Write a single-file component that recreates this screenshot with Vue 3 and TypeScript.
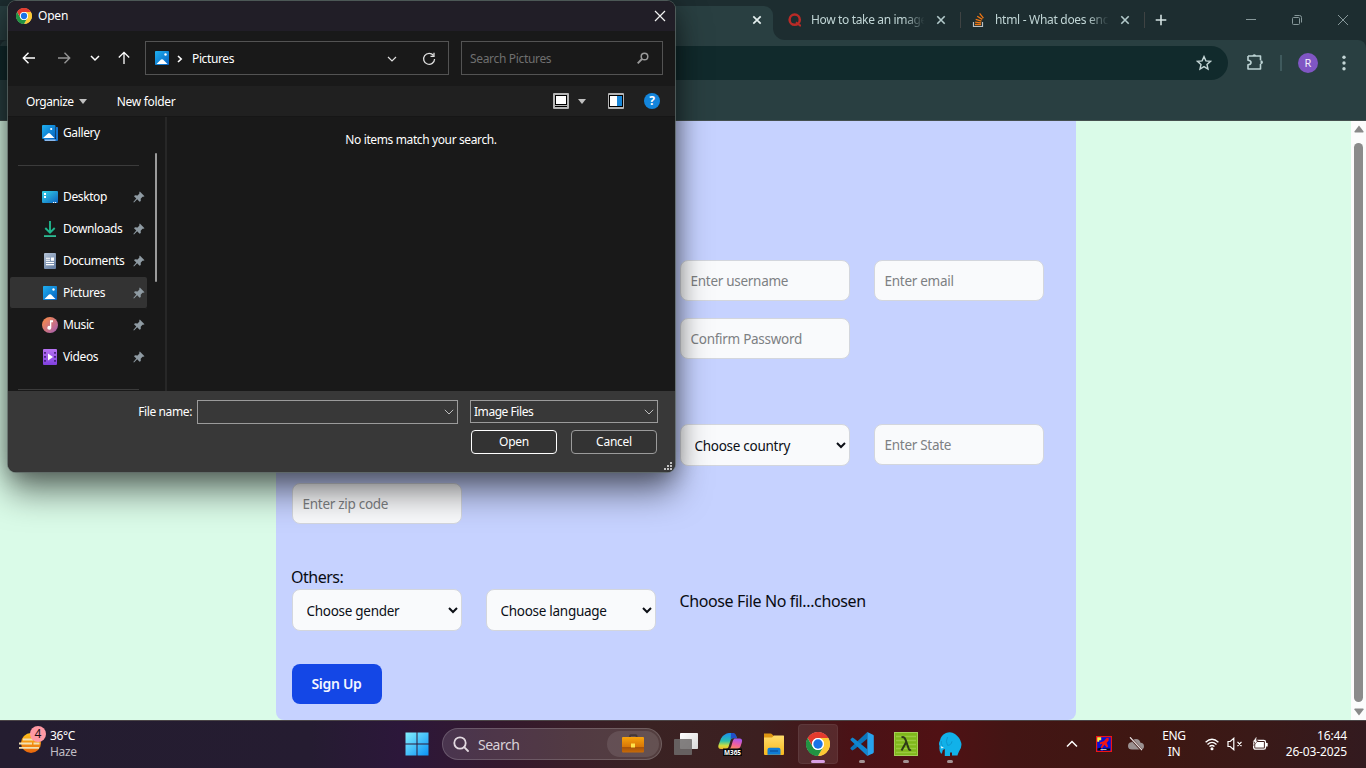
<script setup lang="ts">
interface NavItem {
  name: string
  kind: string
  pinned?: boolean
  active?: boolean
}

const navItems: NavItem[] = [
  { name: 'Gallery', kind: 'gallery' },
  { name: '', kind: 'divider' },
  { name: 'Desktop', kind: 'desktop', pinned: true },
  { name: 'Downloads', kind: 'downloads', pinned: true },
  { name: 'Documents', kind: 'documents', pinned: true },
  { name: 'Pictures', kind: 'pictures', pinned: true, active: true },
  { name: 'Music', kind: 'music', pinned: true },
  { name: 'Videos', kind: 'videos', pinned: true },
  { name: '', kind: 'divider' },
]
</script>

<template>
  <div class="screen">
    <svg width="0" height="0" class="defs">
      <defs>
        <linearGradient id="pic" x1="0" y1="0" x2="1" y2="1"><stop offset="0" stop-color="#1fb0f0" /><stop offset="1" stop-color="#0560c0" /></linearGradient>
        <linearGradient id="desk" x1="0" y1="0" x2="1" y2="1"><stop offset="0" stop-color="#35d5e8" /><stop offset="1" stop-color="#0d62c0" /></linearGradient>
        <linearGradient id="doc" x1="0" y1="0" x2="0.6" y2="1"><stop offset="0" stop-color="#b4c3d6" /><stop offset="1" stop-color="#6a82a5" /></linearGradient>
        <linearGradient id="mus" x1="0" y1="0" x2="1" y2="1"><stop offset="0.2" stop-color="#ee8557" /><stop offset="1" stop-color="#a05cb8" /></linearGradient>
        <linearGradient id="vid" x1="0" y1="0" x2="0" y2="1"><stop offset="0" stop-color="#b873f4" /><stop offset="1" stop-color="#8140e0" /></linearGradient>
        <linearGradient id="win" x1="0" y1="0" x2="1" y2="1"><stop offset="0" stop-color="#84f0ff" /><stop offset="1" stop-color="#0a92f5" /></linearGradient>
        <linearGradient id="sun" x1="0" y1="0" x2="0" y2="1"><stop offset="0" stop-color="#ffc21a" /><stop offset="1" stop-color="#e8640c" /></linearGradient>
        <linearGradient id="case" x1="0" y1="0" x2="0" y2="1"><stop offset="0" stop-color="#f7a30c" /><stop offset="0.62" stop-color="#d97706" /><stop offset="0.68" stop-color="#a85308" /><stop offset="1" stop-color="#c96c08" /></linearGradient>
        <linearGradient id="fold" x1="0" y1="0" x2="0" y2="1"><stop offset="0" stop-color="#ffdc6b" /><stop offset="1" stop-color="#f8b81d" /></linearGradient>
        <linearGradient id="copA" x1="0" y1="0" x2="0" y2="1"><stop offset="0" stop-color="#1a8ff0" /><stop offset="0.5" stop-color="#29bfae" /><stop offset="0.8" stop-color="#d3df3b" /><stop offset="1" stop-color="#f2b52b" /></linearGradient>
        <linearGradient id="copB" x1="0.6" y1="0" x2="0.3" y2="1"><stop offset="0" stop-color="#a559f2" /><stop offset="0.5" stop-color="#ec5da8" /><stop offset="1" stop-color="#ff8a5c" /></linearGradient>
        <linearGradient id="tvA" x1="0" y1="0" x2="1" y2="1"><stop offset="0" stop-color="#ffffff" /><stop offset="1" stop-color="#d8d8d8" /></linearGradient>
        <symbol id="chrome" viewBox="0 0 48 48">
          <circle cx="24" cy="24" r="23.500" fill="#fff" />
          <path d="M24 12h20.8A24 24 0 0 0 3.2 12l10.4 18A12 12 0 0 1 24 12z" fill="#e33b2e" />
          <path d="M34.4 30 24 48A24 24 0 0 0 44.8 12H24a12 12 0 0 1 10.4 18z" fill="#fcc934" />
          <path d="M13.6 30 3.2 12A24 24 0 0 0 24 48l10.4-18a12 12 0 0 1-20.8 0z" fill="#229342" />
          <circle cx="24" cy="24" r="12" fill="#fff" />
          <circle cx="24" cy="24" r="9.4" fill="#1a73e8" />
        </symbol>
        <symbol id="picture" viewBox="0 0 14 14">
          <rect width="14" height="14" rx="0.8" fill="url(#pic)" />
          <path d="M1.5 13 6 8.6q1-.8 2 0L12.500 13z" fill="#fff" />
          <circle cx="10.500" cy="3.500" r="1.200" fill="#fff" />
        </symbol>
      </defs>
    </svg>

    <!-- browser -->
    <header class="tabstrip">
      <div class="strip-left">
        <div class="tab-active">
          <svg width="10" height="10" viewBox="0 0 10 10"><path d="M1.300 1.300l7.400 7.400M8.700 1.300L1.300 8.700" stroke="#e4efef" stroke-width="1.700" /></svg>
        </div>
      </div>
      <div class="strip-right">
        <div class="tab">
          <svg class="fav" width="14" height="14" viewBox="0 0 14 14"><circle cx="6.700" cy="6.700" r="5.100" fill="none" stroke="#b92b27" stroke-width="2.500" /><path d="M8 9.300l4 3.200H13" fill="none" stroke="#b92b27" stroke-width="1.800" /></svg>
          <span class="tab-title t1">How to take an image</span>
          <svg width="10" height="10" viewBox="0 0 10 10"><path d="M1.300 1.300l7.400 7.400M8.700 1.300L1.300 8.700" stroke="#b3cacb" stroke-width="1.600" /></svg>
        </div>
        <i class="tab-sep"></i>
        <div class="tab second">
          <svg class="fav" width="14" height="16" viewBox="0 0 14 16"><path d="M1.500 10v4.500h9V10" fill="none" stroke="#bcc0c4" stroke-width="1.200" /><path d="M3 12.500h6M3.100 10.100l6 .8M3.700 7.300l5.800 1.800M5.200 4.200l5.100 3.200M7.600 1.400l3.800 4.700" stroke="#ef7714" stroke-width="1.300" /></svg>
          <span class="tab-title t2">html - What does enc</span>
          <svg width="10" height="10" viewBox="0 0 10 10"><path d="M1.300 1.300l7.400 7.400M8.700 1.300L1.300 8.700" stroke="#b3cacb" stroke-width="1.600" /></svg>
        </div>
        <i class="tab-sep"></i>
        <svg class="plus" width="12" height="12" viewBox="0 0 12 12"><path d="M6 .7v10.600M.7 6h10.600" stroke="#d4e2e2" stroke-width="1.600" /></svg>
        <div class="winctl">
          <svg width="12" height="12" viewBox="0 0 12 12"><path d="M1 5.500h10" stroke="#87989a" /></svg>
          <svg width="12" height="12" viewBox="0 0 12 12"><rect x="1.500" y="3.500" width="7" height="7" rx="1" fill="none" stroke="#87989a" /><path d="M3.500 1.500h5a2 2 0 0 1 2 2v5" fill="none" stroke="#87989a" /></svg>
          <svg width="12" height="12" viewBox="0 0 12 12"><path d="M1 1l10 10M11 1L1 11" stroke="#87989a" /></svg>
        </div>
      </div>
    </header>
    <div class="toolbar-wrap">
      <div class="toolbar">
        <div class="omnibox">
          <svg width="16" height="16" viewBox="0 0 16 16"><path d="M8 1.600l1.900 4.300 4.600.4-3.500 3.100 1 4.600L8 11.600 4 14l1-4.600L1.500 6.300l4.600-.4z" fill="none" stroke="#c4d6d6" stroke-width="1.400" /></svg>
        </div>
        <svg class="ext" width="18" height="18" viewBox="0 0 18 18"><path d="M2 3h12.500v4.300M14.500 11v5H2v-4.200q3-.3 3-2.300T2 7.300V3" fill="none" stroke="#bcd3d4" stroke-width="1.600" stroke-linejoin="round" /><path d="M6.500 3a1.800 1.800 0 0 1 3.600 0zM14.500 7.200q2.500.2 2.500 2t-2.500 2z" fill="#bcd3d4" /></svg>
        <i class="tool-sep"></i>
        <span class="avatar">R</span>
        <svg class="dots" width="4" height="16" viewBox="0 0 4 16" fill="#c3d5d5"><circle cx="2" cy="2.300" r="1.700" /><circle cx="2" cy="8" r="1.700" /><circle cx="2" cy="13.700" r="1.700" /></svg>
      </div>
    </div>

    <!-- sign-up page -->
    <main class="page">
      <div class="viewport">
        <form class="card" @submit.prevent>
          <div class="grid first">
            <input class="c3" placeholder="Enter username" />
            <input class="c4" placeholder="Enter email" />
            <input class="c3" type="password" placeholder="Confirm Password" />
          </div>
          <div class="grid address">
            <select class="c3"><option>Choose country</option></select>
            <input class="c4" placeholder="Enter State" />
            <input class="c1" placeholder="Enter zip code" />
          </div>
          <div class="others">Others:</div>
          <div class="grid last">
            <select><option>Choose gender</option></select>
            <select><option>Choose language</option></select>
            <span class="file">Choose File No fil...chosen</span>
          </div>
          <button class="signup" type="submit">Sign Up</button>
        </form>
      </div>
      <div class="scrollbar">
        <svg width="10" height="8" viewBox="0 0 10 8"><path d="M5 .5l4.600 6q.2 1-.8 1H1.200q-1 0-.8-1z" fill="#898989" /></svg>
        <i class="thumb"></i>
        <svg width="10" height="8" viewBox="0 0 10 8"><path d="M5 7.500l4.600-6q.2-1-.8-1H1.200q-1 0-.8 1z" fill="#898989" /></svg>
      </div>
    </main>

    <!-- file dialog -->
    <section class="dialog">
      <div class="d-title">
        <svg width="16" height="16"><use href="#chrome" /></svg>
        <span>Open</span>
        <svg class="d-close" width="12" height="12" viewBox="0 0 12 12"><path d="M1 1l10 10M11 1L1 11" stroke="#f2f2f2" stroke-width="1.200" /></svg>
      </div>
      <div class="d-nav">
        <svg width="14" height="14" viewBox="0 0 14 14" fill="none" stroke="#fff" stroke-width="1.400"><path d="M13 7H1.500M6.500 1.800L1.300 7l5.200 5.200" /></svg>
        <svg class="n2" width="14" height="14" viewBox="0 0 14 14" fill="none" stroke="#959595" stroke-width="1.400"><path d="M1 7h11.500M7.500 1.800L12.700 7l-5.200 5.200" /></svg>
        <svg class="n3" width="10" height="10" viewBox="0 0 10 10" fill="none" stroke="#fff" stroke-width="1.500"><path d="M1 3l4 4 4-4" /></svg>
        <svg class="n4" width="14" height="14" viewBox="0 0 14 14" fill="none" stroke="#fff" stroke-width="1.300"><path d="M7 13V1.500M1.800 6.500L7 1.300l5.200 5.200" /></svg>
        <div class="address-bar">
          <svg width="14" height="14"><use href="#picture" /></svg>
          <svg class="crumb" width="6" height="8" viewBox="0 0 6 8" fill="none" stroke="#fff" stroke-width="1.600"><path d="M1 1l3.200 3L1 7" /></svg>
          <span>Pictures</span>
          <svg class="drop" width="10" height="8" viewBox="0 0 10 8" fill="none" stroke="#e0e0e0" stroke-width="1.200"><path d="M1 2l4 4 4-4" /></svg>
          <svg class="reload" width="14" height="14" viewBox="0 0 14 14" fill="none" stroke="#dedede" stroke-width="1.300"><path d="M11.500 3.500A5.500 5.500 0 1 0 12.600 7" /><path d="M12 .8v3.500H8.500" /></svg>
        </div>
        <div class="search-box">
          <span>Search Pictures</span>
          <svg width="12" height="12" viewBox="0 0 12 12" fill="none" stroke="#9a9a9a"><circle cx="7.500" cy="4.500" r="3.300" stroke-width="1.500" /><path d="M5 7L.7 11.300" stroke-width="1.900" /></svg>
        </div>
      </div>
      <div class="d-tools">
        <span class="organize">Organize</span>
        <i class="tri"></i>
        <span class="newfolder">New folder</span>
        <svg class="view" width="16" height="16" viewBox="0 0 16 16"><rect width="16" height="16" rx="1" fill="#b5b5b5" /><rect x="2" y="2" width="12" height="12" fill="#000" /><rect x="3" y="3" width="10" height="8" fill="#fff" /><path d="M2 12.500h12" stroke="#b5b5b5" /></svg>
        <i class="tri t2"></i>
        <svg class="pane" width="16" height="16" viewBox="0 0 16 16"><rect width="16" height="16" rx="1" fill="#b5b5b5" /><rect x="1" y="2" width="14" height="12" fill="#000" /><path d="M2 3h7v10H2z" fill="#fff" /><path d="M9 3h5v10H9z" fill="#1786d8" /></svg>
        <span class="help">?</span>
      </div>
      <div class="d-body">
        <nav class="side">
          <div v-for="(item, i) in navItems" :key="i" :class="['row', { active: item.active, divider: item.kind === 'divider' }]">
            <template v-if="item.kind !== 'divider'">
              <svg class="ico" width="16" height="16" viewBox="0 0 16 16">
                <template v-if="item.kind === 'gallery'">
                  <path d="M14 2h1.200q.8 0 .8.800V15q0 1-1 1H3q-.8 0-.8-1v-1H14z" fill="#1676d2" /><path d="M2.500 14.500h11V16H3z" fill="#8bb8ea" />
                  <rect width="13.500" height="14" rx="1" fill="url(#pic)" /><path d="M1 13l5-4.500q1-.8 2 0L12.500 13z" fill="#fff" /><circle cx="9.200" cy="4" r="1.100" fill="#fff" />
                </template>
                <template v-else-if="item.kind === 'desktop'">
                  <rect y="2" width="16" height="12" rx="1" fill="url(#desk)" /><path d="M2 4h2v2H2zM2 7h2v2H2z" fill="#fff" /><path d="M11 13h1.200v1H11zM13 13h1.200v1H13z" fill="#fff" />
                </template>
                <template v-else-if="item.kind === 'downloads'">
                  <path d="M8 0v11.500M3.300 7L8 11.700 12.700 7" fill="none" stroke="#20b58d" stroke-width="1.900" /><path d="M2 15.100h12" stroke="#2fc59b" stroke-width="1.700" />
                </template>
                <template v-else-if="item.kind === 'documents'">
                  <rect x="2" width="12" height="16" rx="1" fill="url(#doc)" /><path d="M4 5.200h4M4 7.300h4M4 9.500h8M4 11.600h8" stroke="#fff" stroke-width="1.100" /><path d="M9 4.500h3v3.300H9z" fill="#fff" />
                </template>
                <use v-else-if="item.kind === 'pictures'" href="#picture" x="1" y="1" width="14" height="14" />
                <template v-else-if="item.kind === 'music'">
                  <circle cx="8" cy="8" r="8" fill="url(#mus)" /><path d="M8 3.200h3v2H9.300v5.600a2 2 0 1 1-1.300-1.900z" fill="#fff" />
                </template>
                <template v-else>
                  <rect x="1" width="14" height="16" rx="1" fill="url(#vid)" /><path d="M2.200 3h1.600v1.800H2.200zM2.200 7h1.600v1.800H2.200zM2.200 11h1.600v1.800H2.200zM12.200 3h1.600v1.800h-1.600zM12.200 7h1.600v1.800h-1.600zM12.200 11h1.600v1.800h-1.600z" fill="#3a1b6c" /><path d="M6 4.500L11 8l-5 3.500z" fill="#fff" />
                </template>
              </svg>
              <span>{{ item.name }}</span>
              <svg v-if="item.pinned" class="pin" width="12" height="12" viewBox="0 0 12 12"><path d="M6.800.5l4.700 4.700-1.200.6-.8-.1-1.800 2 .1 2.200-1.200.9-2.400-2.500L1 11.500l-.7-.6 3-3.300L1 5.300l1-1 2.600.1 1.800-1.800-.1-1.300z" fill="#8f9ba3" /></svg>
            </template>
            <i v-else></i>
          </div>
        </nav>
        <div class="side-scroll"><i></i></div>
        <div class="empty">No items match your search.</div>
      </div>
      <div class="d-foot">
        <div class="foot-row">
          <span class="fn">File name:</span>
          <div class="combo name"><svg width="10" height="8" viewBox="0 0 10 8" fill="none" stroke="#bdbdbd"><path d="M.8 1.800L5 6l4.200-4.200" /></svg></div>
          <div class="combo type"><span>Image Files</span><svg width="10" height="8" viewBox="0 0 10 8" fill="none" stroke="#bdbdbd"><path d="M.8 1.800L5 6l4.200-4.200" /></svg></div>
        </div>
        <div class="foot-buttons">
          <button type="button" class="primary">Open</button>
          <button type="button">Cancel</button>
        </div>
        <svg class="grip" width="8" height="8" viewBox="0 0 8 8" fill="#c2c2c2"><path d="M6 0h2v2H6zM3 3h2v2H3zM6 3h2v2H6zM0 6h2v2H0zM3 6h2v2H3zM6 6h2v2H6z" /></svg>
      </div>
    </section>

    <!-- taskbar -->
    <footer class="taskbar">
      <div class="weather">
        <div class="wicon">
          <svg width="24" height="22" viewBox="0 0 24 22"><circle cx="12" cy="11" r="10" fill="url(#sun)" /><path d="M4 7.500h10M17 6h6M0 11.500h13M14.500 11.500h6M0 15.800h20" stroke="#f1dfb0" stroke-width="1.800" /></svg>
          <span class="badge">4</span>
        </div>
        <div class="wtext"><b>36°C</b><span>Haze</span></div>
      </div>
      <div class="center">
        <svg class="start" width="24" height="24" viewBox="0 0 24 24"><path d="M.5.500H11.500V11.500H.5zM12.500.500h11v11h-11zM.5 12.500h11v11H.5zM12.500 12.500h11v11h-11z" fill="url(#win)" /></svg>
        <div class="search">
          <svg width="16" height="16" viewBox="0 0 16 16" fill="none" stroke="#e2d9e0" stroke-width="1.800"><circle cx="7" cy="7" r="5.700" /><path d="M11.200 11.200l3.800 3.800" stroke-linecap="round" /></svg>
          <span>Search</span>
          <div class="pill">
            <svg width="24" height="20" viewBox="0 0 24 20"><path d="M9 4V2q0-.8.800-.8h5q.8 0 .8.800v2" fill="none" stroke="#443735" stroke-width="1.800" /><rect x="1" y="3" width="22" height="15.500" rx="1" fill="url(#case)" /><rect x="10" y="9.500" width="4" height="4" fill="#ffe34a" /></svg>
          </div>
        </div>
        <div class="app"><svg width="26" height="24" viewBox="0 0 26 24"><rect x="7" y="1" width="18" height="16" rx=".8" fill="url(#tvA)" /><rect x="1" y="7" width="18" height="16" rx=".8" fill="#6f6b6b" opacity=".85" /></svg></div>
        <div class="app"><svg width="26" height="24" viewBox="0 0 26 24">
          <path d="M8 2.500q1.400-1.600 4-1.600h3.500q2.600 0 3.500 2.600l.9 2.700h-4q-1.700 0-2.300 2L11.500 15q-.6 2-2.700 2H4Q.5 17 1.500 13L4 6.500q1.500-3 4-4z" fill="url(#copA)" />
          <path d="M14 1h2q2.300 0 3 2.600l.8 2.500h-4q-1.500 0-2.100 1.600z" fill="#214fc9" />
          <path d="M17.500 6.500h5q3.400 0 2.300 4l-1.300 4q-.8 2.300-3.300 2.500H12q1.600-.5 2.200-2.600l1.600-5.400q.6-2 1.700-2.500z" fill="url(#copB)" />
          <rect x="6" y="16.500" width="19" height="7.500" fill="#080808" /><text x="7" y="22.800" textLength="17" lengthAdjust="spacingAndGlyphs" font-size="6.500" font-weight="700" fill="#fff">M365</text></svg></div>
        <div class="app"><svg width="26" height="24" viewBox="0 0 26 24"><path d="M3 1.500h6.500q1 0 1.800 1L13 4v4H3z" fill="#dd9512" /><path d="M3 5.500h8L13 3.500h9.500q.5 0 .5.600v18q0 .9-1 .9H4q-1 0-1-1z" fill="url(#fold)" /><path d="M6.500 22.800v-5q0-2 2-2h9q2 0 2 2v5z" fill="#0f7cd6" /><path d="M9 19h8" stroke="#0a4f9b" stroke-width="1.200" /></svg></div>
        <div class="app current"><svg width="24" height="24"><use href="#chrome" /></svg><i></i></div>
        <div class="app run"><svg width="24" height="24" viewBox="0 0 24 24"><path d="M17.300 0v6.700L4.500 17.200 2.300 18.500.6 17q-.6-.8.200-1.500z" fill="#0a75bd" /><path d="M17.300 24v-6.700L4.500 6.800 2.500 5.600.7 7q-.6.8.200 1.500z" fill="#1186d0" /><path d="M17.300 0L23 2.700q.8.400.8 1.300v16q0 .9-.8 1.300L17.300 24z" fill="#27a3ee" /></svg><i></i></div>
        <div class="app run"><svg width="24" height="24" viewBox="0 0 24 24"><rect x=".5" y=".5" width="23" height="23" fill="#7fb71b" stroke="#a5cf55" /><path d="M2 4.500h20M2 8.500h20M2 12.500h20M2 16.500h20M2 20.500h20" stroke="#9ac93f" stroke-width="1.500" /><path d="M7.500 5.500q2.700-1.500 4 2.200l3.200 9q.7 2 2.200.8M12 10.500L7.500 18.500" fill="none" stroke="#2e3a17" stroke-width="2" /></svg><i></i></div>
        <div class="app run"><svg width="24" height="24" viewBox="0 0 24 24"><path d="M8 1q5-2 9 1 5 3.500 6.300 9 .8 4.500-2.300 8.500-1.200 2.500-1.500 4H14v-3h-2v3.500H6.800V17Q4 17.500 4.300 20.500L3.200 22Q.8 19 1.500 14 .2 11.500 2 8.500 3 3 8 1z" fill="#11b1e9" /><path d="M9.500 5q-2.200 4.500 0 8.300 3.700.2 4.500-4M3.300 9q-.6 3 1.400 5" fill="none" stroke="#0d8fc6" stroke-width=".8" /><path d="M2.700 14l3.200 1.700-2.500.9z" fill="#e7f7fc" /></svg><i></i></div>
      </div>
      <div class="tray">
        <svg class="up" width="12" height="8" viewBox="0 0 12 8" fill="none" stroke="#fff" stroke-width="1.500"><path d="M1 6.500l5-5 5 5" /></svg>
        <svg class="game" width="16" height="16" viewBox="0 0 16 16"><rect x=".6" y=".6" width="14.800" height="14.800" fill="#0712d8" stroke="#f01515" stroke-width="1.200" /><path d="M1.200 1.200h4v3H3.200v1.500h-2z" fill="#ffef3a" /><path d="M10.500 2h2.200v2.500l-2 2.300 1.500 4-1.500.7-2.200-2.700-2.200 3.200H4.500l2-4.500-2.700 1 .2-2 4-1.500z" fill="#f01515" /><path d="M1.500 12.500l3.500-1v3H1.500zM7 12.500h7v2H7z" fill="#080808" /><path d="M4.500 13.500h6" stroke="#bdbdbd" /></svg>
        <svg class="cloud" width="16" height="14" viewBox="0 0 16 14"><path d="M4 12.500Q0 12.500 0 9t3.500-3.700Q4.800 2 8 2q3.800 0 4.500 3.800 3.500.2 3.500 3.400T12.500 12.500z" fill="#9b9191" /><path d="M1.500 0l12.500 13.500" stroke="#3d1814" stroke-width="2.400" /><path d="M2 .3l12 12.900" stroke="#efe6e6" stroke-width="1.200" /></svg>
        <div class="lang"><span>ENG</span><span>IN</span></div>
        <svg class="wifi" width="14" height="14" viewBox="0 0 14 14" fill="none" stroke="#fff" stroke-width="1.300"><path d="M.6 5.300q6.400-6.200 12.800 0M2.500 7.500q4.500-4.300 9 0M4.500 9.600q2.500-2.300 5 0" /><circle cx="7" cy="11.800" r=".9" fill="#fff" /></svg>
        <svg class="mute" width="16" height="14" viewBox="0 0 16 14" fill="none" stroke="#fff" stroke-width="1.200"><path d="M1 4.500h2.200L6.800 1.300v11.400L3.200 9.500H1zM10.500 4.800l4 4.400M14.500 4.800l-4 4.400" /></svg>
        <svg class="batt" width="16" height="14" viewBox="0 0 16 14"><rect x="1.700" y="3.300" width="11.800" height="8.900" rx="1.700" fill="none" stroke="#fff" stroke-width="1.300" /><path d="M3.200 5h8.700v5.600H3.200z" fill="#fff" /><path d="M14 6h1.700v3.500H14z" fill="#fff" /><path d="M4 0L.5 5h2L1.800 8.500 6 3.500H4.200L5 0z" fill="#fff" stroke="#3b1815" stroke-width=".6" /></svg>
        <div class="clock"><span>16:44</span><span>26-03-2025</span></div>
      </div>
    </footer>
  </div>
</template>

<style>
html,
body {
  margin: 0;
  overflow: hidden;
}
</style>

<style scoped>
* {
  box-sizing: border-box;
}
.screen {
  position: relative;
  display: flex;
  flex-direction: column;
  width: 1366px;
  height: 768px;
  overflow: hidden;
  font-family: "Noto Sans", "Open Sans", sans-serif;
  font-size: 12px;
}
.defs {
  position: absolute;
}
svg {
  display: block;
  flex: none;
}
span {
  white-space: nowrap;
}

/* browser chrome */
.tabstrip {
  display: flex;
  height: 40px;
  background: #293f41;
}
.strip-left {
  display: flex;
  align-items: flex-end;
  width: 773px;
  background: #1d2d30;
}
.tab-active {
  display: flex;
  align-items: center;
  justify-content: flex-end;
  width: 100%;
  height: 34px;
  padding: 0 11px 6px 0;
  border-radius: 0 9px 0 0;
  background: #293f41;
}
.strip-right {
  display: flex;
  flex: 1;
  align-items: center;
  border-bottom-left-radius: 12px;
  background: #1d2d30;
}
.tab {
  display: flex;
  align-items: center;
  width: 187px;
  padding-left: 15px;
}
.tab.second {
  width: 183px;
  padding-left: 11px;
}
.fav {
  margin-right: 9px;
}
.tab-title {
  width: 116px;
  margin-right: 9px;
  color: #c0d5d5;
  line-height: 18px;
  -webkit-mask-image: linear-gradient(90deg, #000 80%, transparent 98%);
  mask-image: linear-gradient(90deg, #000 80%, transparent 98%);
}
.t1 {
  letter-spacing: -0.35px;
}
.t2 {
  letter-spacing: -0.3px;
}
.tab-sep {
  width: 1px;
  height: 16px;
  background: #3f4343;
}
.plus {
  margin-left: 10px;
}
.winctl {
  display: flex;
  gap: 34px;
  margin: 0 17px 0 auto;
}
.toolbar-wrap {
  height: 81px;
  background: #1d2d30;
}
.toolbar {
  display: flex;
  height: 81px;
  padding-top: 6px;
  border-bottom: 1px solid #44504f;
  border-radius: 8px 8px 0 0;
  background: #293f41;
}
.omnibox {
  display: flex;
  align-items: center;
  justify-content: flex-end;
  width: 1228px;
  height: 34px;
  padding-right: 16px;
  border-radius: 0 17px 17px 0;
  background: #112a2c;
}
.ext {
  margin: 7px 0 0 18px;
}
.tool-sep {
  width: 2px;
  height: 16px;
  margin: 9px 0 0 16px;
  background: #3f5a5d;
}
.avatar {
  width: 20px;
  height: 20px;
  margin: 7px 0 0 16px;
  border-radius: 50%;
  background: #8056c4;
  color: #f4eefb;
  font-size: 11px;
  line-height: 20px;
  text-align: center;
}
.dots {
  margin: 9px 0 0 24px;
}

/* page */
.page {
  display: flex;
  height: 599px;
}
.viewport {
  width: 1351px;
  background: #dafbe8;
}
.card {
  width: 800px;
  height: 599px;
  margin-left: 276px;
  padding: 139px 16px 0;
  border-radius: 0 0 8px 8px;
  background: #c6d2ff;
}
.grid {
  display: grid;
  grid-template-columns: repeat(4, 170px);
  column-gap: 24px;
}
.first {
  row-gap: 17px;
}
.address {
  row-gap: 17px;
  margin-top: 65px;
}
.c1 {
  grid-column: 1;
}
.c3 {
  grid-column: 3;
}
.c4 {
  grid-column: 4;
}
input,
select {
  width: 170px;
  height: 41px;
  border: 1px solid #d3d6dd;
  border-radius: 8px;
  background-color: #f9fafc;
  color: #0c0f16;
  font: 13.5px "Noto Sans", "Open Sans", sans-serif;
  letter-spacing: -0.28px;
}
input {
  padding: 0 9.500px;
}
select {
  height: 42px;
  padding: 1px 0 0 9.500px;
}
input::placeholder {
  color: #7d8083;
  opacity: 1;
}
.others {
  margin: 42px 0 0 -1px;
  color: #090b12;
  font-size: 16px;
  line-height: 23px;
  letter-spacing: -0.5px;
}
.file {
  margin-left: -0.500px;
  color: #090b12;
  font-size: 16px;
  line-height: 24px;
  letter-spacing: -0.38px;
}
.signup {
  width: 90px;
  height: 40px;
  margin-top: 33px;
  padding: 0 1px 2px 0;
  border: 0;
  border-radius: 8px;
  background: #1447e6;
  color: #f4f6ff;
  font: 600 14px "Noto Sans", "Open Sans", sans-serif;
  letter-spacing: -0.3px;
}
.scrollbar {
  display: flex;
  flex-direction: column;
  align-items: center;
  width: 15px;
  padding: 4px 0 4px;
  background: #fcfcfc;
}
.thumb {
  flex: 1;
  width: 9px;
  margin: 10px 0 6px;
  border-radius: 5px;
  background: #8b8b8b;
}

/* dialog */
.dialog {
  position: absolute;
  left: 8px;
  top: 1px;
  display: flex;
  flex-direction: column;
  width: 667px;
  height: 471px;
  border-radius: 8px;
  background: #191919;
  box-shadow: 0 0 0 1px rgba(95, 105, 103, 0.75), 0 20px 34px rgba(0, 0, 0, 0.5), 0 2px 22px rgba(0, 0, 0, 0.32);
  color: #fff;
  letter-spacing: -0.38px;
}
.d-title {
  display: flex;
  align-items: center;
  height: 30px;
  padding: 0 9px 1px 8px;
  border-radius: 8px 8px 0 0;
  background: #211e27;
}
.d-title span {
  margin-left: 6px;
  letter-spacing: -0.2px;
}
.d-close {
  margin-left: auto;
}
.d-nav {
  display: flex;
  align-items: center;
  height: 55px;
  padding: 0 0 1px 14px;
}
.n2 {
  margin-left: 21px;
}
.n3 {
  margin-left: 19px;
}
.n4 {
  margin-left: 17px;
}
.address-bar {
  display: flex;
  align-items: center;
  width: 304px;
  height: 34px;
  margin-left: 14px;
  padding: 0 12px 0 9px;
  border: 1px solid #535353;
}
.crumb {
  margin: 1px 9px 0 8px;
}
.drop {
  margin: 2px 25px 0 auto;
}
.reload {
  margin-top: 2px;
}
.search-box {
  display: flex;
  align-items: center;
  justify-content: space-between;
  width: 202px;
  height: 34px;
  margin-left: 12px;
  padding: 0 13px 0 8px;
  border: 1px solid #535353;
  color: #6f6f6f;
  letter-spacing: -0.33px;
}
.d-tools {
  display: flex;
  align-items: center;
  height: 30px;
  padding: 0 15px 0 18px;
  background: #202020;
}
.organize {
  letter-spacing: -0.45px;
}
.tri {
  margin-left: 5px;
  border-top: 5px solid #c0c0c0;
  border-right: 4px solid transparent;
  border-left: 4px solid transparent;
}
.newfolder {
  margin-left: 30px;
  letter-spacing: -0.3px;
}
.view {
  margin-left: auto;
}
.tri.t2 {
  margin-left: 9px;
}
.pane {
  margin-left: 22px;
}
.help {
  width: 16px;
  height: 16px;
  margin-left: 20px;
  border-radius: 50%;
  background: #1385dc;
  font-size: 12px;
  font-weight: 700;
  letter-spacing: 0;
  line-height: 16px;
  text-align: center;
}
.d-body {
  display: flex;
  height: 275px;
  border-top: 1px solid #161616;
}
.side {
  width: 139px;
  padding-left: 2px;
  overflow: hidden;
}
.row {
  display: flex;
  align-items: center;
  height: 32px;
  padding: 0 2px 0 32px;
  border-radius: 2px;
}
.row.active {
  background: #333;
  box-shadow: inset 0 -1px #191919;
}
.row.divider {
  padding: 0 8px;
}
.row.divider i {
  width: 100%;
  height: 1px;
  background: #3b3b3b;
}
.row span {
  margin: -2px 0 0 5px;
}
.pin {
  margin-left: auto;
}
.side-scroll {
  width: 20px;
  padding: 36px 0 0 8px;
  border-right: 2px solid #272727;
}
.side-scroll i {
  display: block;
  width: 2px;
  height: 129px;
  border-radius: 1px;
  background: #9b9b9b;
}
.empty {
  flex: 1;
  padding: 14px 0 0 0;
  line-height: 18px;
  text-align: center;
}
.d-foot {
  position: relative;
  height: 81px;
  border-radius: 0 0 8px 8px;
  background: #383838;
}
.foot-row {
  display: flex;
  justify-content: flex-end;
  padding: 9px 17px 0 0;
}
.fn {
  margin-right: 5px;
  line-height: 23px;
}
.combo {
  display: flex;
  align-items: center;
  border: 1px solid #9b9b9b;
  background: #383838;
}
.combo svg {
  margin-left: auto;
}
.name {
  width: 261px;
  height: 24px;
  padding-right: 3px;
}
.type {
  width: 188px;
  height: 23px;
  margin-left: 12px;
  padding: 0 3px;
}
.type span {
  letter-spacing: -0.45px;
}
.foot-buttons {
  display: flex;
  justify-content: flex-end;
  gap: 14px;
  padding: 6px 18px 0 0;
}
.foot-buttons button {
  width: 86px;
  height: 24px;
  padding: 0 0 1px;
  border: 1px solid #9b9b9b;
  border-radius: 4px;
  background: #333;
  color: #fff;
  font: inherit;
  letter-spacing: -0.25px;
}
.foot-buttons .primary {
  border-color: #fff;
}
.grip {
  position: absolute;
  right: 3px;
  bottom: 2px;
}

/* taskbar */
.taskbar {
  display: flex;
  align-items: center;
  height: 48px;
  border-top: 1px solid #4b4547;
  background: linear-gradient(90deg, #241d30 0, #251c31 310px, #2c173a 400px, #34192e 500px, #391d28 570px, #3a2223 650px, #3c1f20 760px, #4a1216 850px, #501114 940px, #431514 1010px, #3e1712 1150px, #3a1917 1250px, #331a1f 1366px);
  color: #fff;
}
.weather {
  display: flex;
  width: 405px;
  padding-left: 19px;
}
.wicon {
  position: relative;
  width: 24px;
  margin-top: -3px;
  padding-top: 6px;
}
.badge {
  position: absolute;
  top: 0;
  left: 11px;
  width: 16px;
  height: 16px;
  border-radius: 50%;
  background: #ff99a4;
  color: #1c1012;
  line-height: 16px;
  text-align: center;
}
.wtext {
  display: flex;
  flex-direction: column;
  margin: -1px 0 0 7px;
  line-height: 16px;
  letter-spacing: -0.35px;
}
.wtext b {
  font-weight: 400;
}
.wtext span {
  color: #c1bec5;
  letter-spacing: -0.3px;
}
.center {
  display: flex;
  align-items: center;
  width: 660px;
  margin-top: -1px;
}
.search {
  display: flex;
  align-items: center;
  width: 220px;
  height: 32px;
  margin: 0 4px 0 13px;
  padding: 0 2px 0 10px;
  border: 1px solid rgba(255, 255, 255, 0.17);
  border-radius: 16px;
  background: rgba(255, 255, 255, 0.13);
}
.search span {
  margin-left: 9px;
  color: #d9d1d8;
  font-size: 14px;
  letter-spacing: -0.5px;
}
.pill {
  display: flex;
  align-items: center;
  justify-content: center;
  width: 52px;
  height: 26px;
  margin-left: auto;
  border-radius: 13px;
  background: rgba(255, 255, 255, 0.1);
}
.app {
  position: relative;
  display: flex;
  align-items: center;
  justify-content: center;
  width: 40px;
  height: 40px;
  margin-right: 4px;
}
.current {
  border-radius: 4px;
  background: rgba(255, 255, 255, 0.09);
  box-shadow: inset 0 0 0 1px rgba(255, 255, 255, 0.06);
}
.app i {
  position: absolute;
  bottom: 1px;
  width: 6px;
  height: 3px;
  border-radius: 2px;
  background: #a39294;
}
.current i {
  width: 14px;
  background: #d9a0e4;
}
.tray {
  display: flex;
  flex: 1;
  align-items: center;
  margin-top: -1px;
  padding-right: 19px;
}
.up {
  margin-left: 1px;
}
.game {
  margin-left: 18px;
}
.cloud {
  margin-left: 16px;
}
.lang {
  display: flex;
  flex-direction: column;
  align-items: center;
  width: 26px;
  margin-left: 17px;
  line-height: 16px;
  letter-spacing: -0.3px;
}
.wifi {
  margin-left: 18px;
}
.mute {
  margin-left: 8px;
}
.batt {
  margin-left: 9px;
}
.clock {
  display: flex;
  flex-direction: column;
  align-items: flex-end;
  margin-left: auto;
  line-height: 16px;
  letter-spacing: -0.13px;
}
</style>
